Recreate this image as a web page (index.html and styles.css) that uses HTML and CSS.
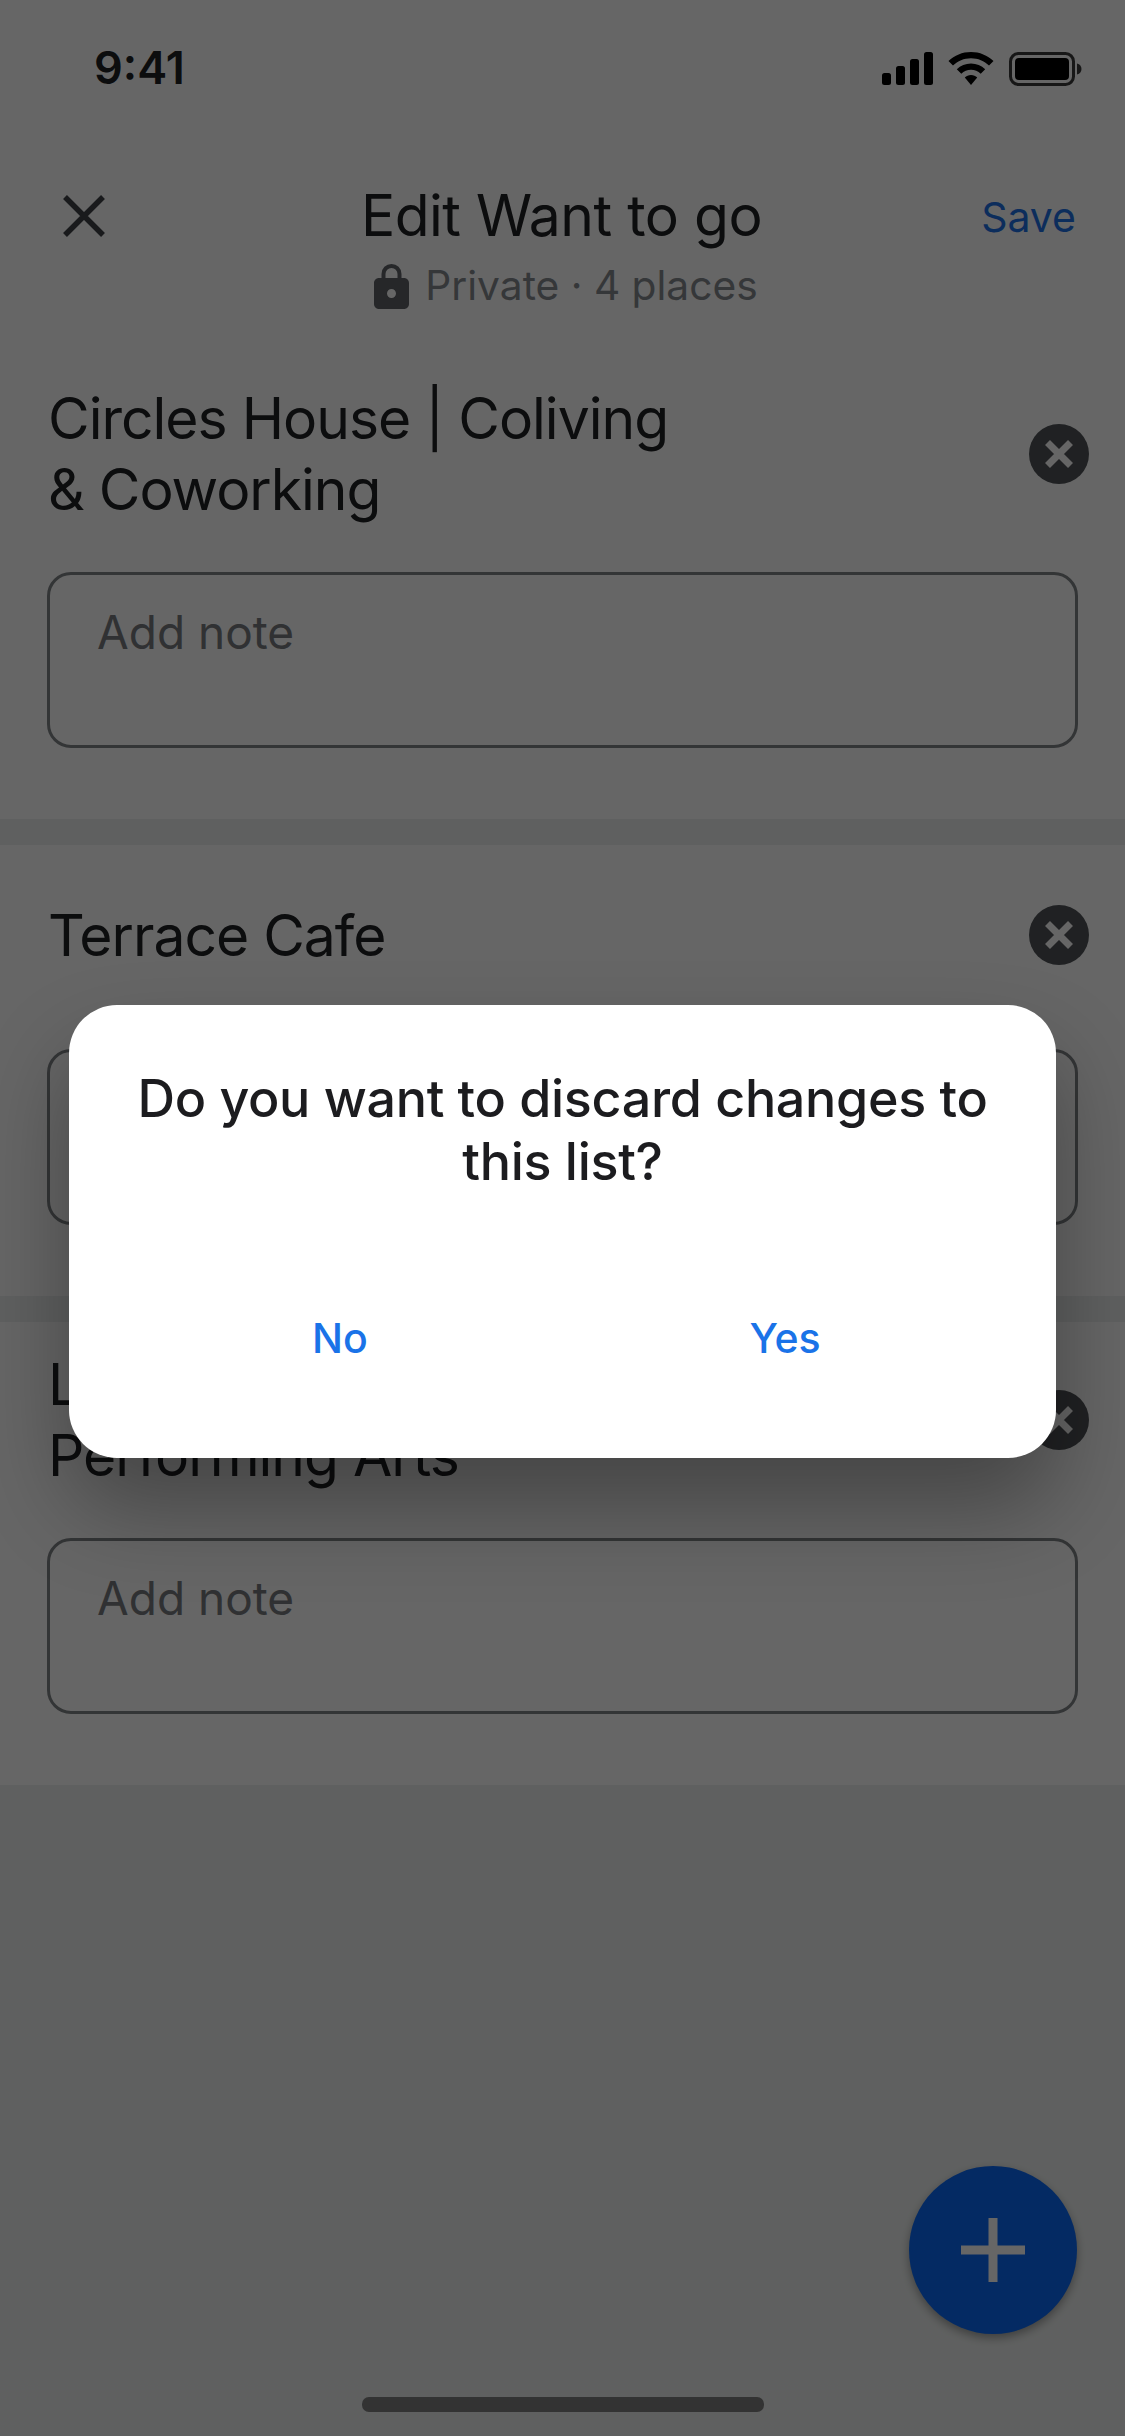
FILE: index.html
```html
<!DOCTYPE html>
<html lang="en">
<head>
<meta charset="utf-8">
<title>Edit Want to go</title>
<link rel="stylesheet" href="styles.css">
</head>
<body>
<div class="screen">
  <div class="status">
    <span class="clock">9:41</span>
    <div class="status-icons">
      <svg class="ic-signal" width="53" height="33" viewBox="0 0 53 33"><rect x="2" y="21" width="9" height="12" rx="2.500"/><rect x="16" y="14" width="9" height="19" rx="2.500"/><rect x="30" y="7" width="9" height="26" rx="2.500"/><rect x="44" y="0" width="9" height="33" rx="2.500"/></svg>
      <svg class="ic-wifi" width="46" height="33" viewBox="0 0 46 33"><path d="M23 0C14.300 0 6.500 3.400 0.500 9L5 13.500C9.700 9.100 16 6.300 23 6.300S36.300 9.100 41 13.500L45.500 9C39.500 3.400 31.700 0 23 0Z"/><path d="M23 11.500C17.500 11.500 12.600 13.600 8.800 17.200L13.300 21.700C15.900 19.300 19.300 17.800 23 17.800S30.100 19.300 32.700 21.700L37.200 17.200C33.400 13.600 28.500 11.500 23 11.500Z"/><path d="M23 23C20.500 23 18.400 24 16.800 25.400L23 33L29.200 25.400C27.600 24 25.500 23 23 23Z"/></svg>
      <svg class="ic-batt" width="73" height="34" viewBox="0 0 73 34"><rect x="1.500" y="1.500" width="63" height="31" rx="8" fill="none" stroke="#3a3a3a" stroke-width="3"/><rect x="6" y="6" width="54" height="22" rx="4"/><path d="M68 11.500c3 .6 4.500 3 4.500 5.500s-1.500 4.900-4.500 5.500z" fill="#3a3a3a"/></svg>
    </div>
  </div>

  <header class="head">
    <svg class="close" width="44" height="44" viewBox="0 0 44 44"><path d="M3 3L41 41M41 3L3 41"/></svg>
    <div class="head-mid">
      <div class="head-title">Edit Want to go</div>
      <div class="head-sub">
        <svg class="lock" width="35" height="45" viewBox="0 0 35 45"><path d="M9.500 15V10C9.500 5.300 13 2 17.500 2S25.500 5.300 25.500 10V15" fill="none" stroke="#5f6368" stroke-width="4"/><path fill-rule="evenodd" d="M5 14H30C32.800 14 35 16.200 35 19V40C35 42.800 32.800 45 30 45H5C2.200 45 0 42.800 0 40V19C0 16.200 2.200 14 5 14ZM17.500 25C15 25 13 27 13 29.500S15 34 17.500 34 22 32 22 29.500 20 25 17.500 25Z"/></svg>
        <span>Private · 4 places</span>
      </div>
    </div>
    <div class="save">Save</div>
  </header>

  <section class="item">
    <div class="row">
      <div class="name">Circles House | Coliving<br>&amp; Coworking</div>
      <svg class="remove" width="60" height="60" viewBox="0 0 60 60"><circle cx="30" cy="30" r="30"/><path d="M18.500 18.500L41.500 41.500M41.500 18.500L18.500 41.500"/></svg>
    </div>
    <div class="note">Add note</div>
  </section>

  <section class="item">
    <div class="row row-single">
      <div class="name">Terrace Cafe</div>
      <svg class="remove" width="60" height="60" viewBox="0 0 60 60"><circle cx="30" cy="30" r="30"/><path d="M18.500 18.500L41.500 41.500M41.500 18.500L18.500 41.500"/></svg>
    </div>
    <div class="note">Add note</div>
  </section>

  <section class="item">
    <div class="row">
      <div class="name">Lincoln Center for the<br>Performing Arts</div>
      <svg class="remove" width="60" height="60" viewBox="0 0 60 60"><circle cx="30" cy="30" r="30"/><path d="M18.500 18.500L41.500 41.500M41.500 18.500L18.500 41.500"/></svg>
    </div>
    <div class="note">Add note</div>
  </section>

  <button class="fab" type="button"><svg width="64" height="64" viewBox="0 0 64 64"><path d="M27.500 0h9v27.500H64v9H36.500V64h-9V36.500H0v-9h27.500z"/></svg></button>
  <div class="scrim"></div>

  <div class="dialog">
    <p class="dialog-text">Do you want to discard changes to this list?</p>
    <div class="dialog-actions">
      <span class="dialog-btn">No</span>
      <span class="dialog-btn">Yes</span>
    </div>
  </div>
  <div class="home-bar"></div>
</div>
</body>
</html>
```
FILE: styles.css
```css
* { box-sizing: border-box; }
html, body { margin: 0; padding: 0; }
body { font-family: Inter, "Liberation Sans", sans-serif; }
.screen {
  position: relative;
  width: 1125px;
  height: 2436px;
  overflow: hidden;
  background: #eef1f0;
  color: #202124;
}
.status {
  height: 132px;
  padding: 44px 43px 0 94px;
  display: flex;
  justify-content: space-between;
  align-items: flex-start;
  background: #fff;
}
.clock { font-size: 45px; font-weight: 600; line-height: 48px; }
.status-icons { display: flex; align-items: flex-start; gap: 15px; padding-top: 8px; }
.head {
  height: 224px;
  background: #fff;
  display: grid;
  grid-template-columns: 1fr auto 1fr;
  padding: 0 52px 0 50px;
}
.close { margin: 62px 0 0 12px; fill: none; stroke: #404347; stroke-width: 5.5; }
.head-mid { display: flex; flex-direction: column; align-items: center; padding-top: 50px; }
.head-title { font-size: 57px; line-height: 68px; letter-spacing: -0.5px; }
.head-sub { display: flex; align-items: center; gap: 16px; margin-top: 13px; padding-left: 9px; color: #85898e; font-size: 40.7px; line-height: 46px; }
.lock { fill: #5f6368; }
.save { justify-self: end; margin: 62px -3px 0 0; font-size: 41px; line-height: 46px; color: #1f72e6; }
.item {
  background: #fff;
  padding: 27px 47px 71px 49px;
  margin-bottom: 26px;
}
.row {
  display: flex;
  justify-content: space-between;
  align-items: center;
  margin-bottom: 47px;
}
.row-single { min-height: 126px; margin-bottom: 51px; }
.name { margin-left: -1px; font-size: 57px; line-height: 71px; letter-spacing: -1px; }
.remove { margin-right: -11px; fill: #505458; }
.remove path { fill: none; stroke: #fff; stroke-width: 7; }
.note {
  margin-left: -2px;
  height: 176px;
  border: 3px solid #808488;
  border-radius: 24px;
  padding: 31px 47px;
  font-size: 46px;
  line-height: 52px;
  color: #787c80;
}
.fab {
  position: absolute;
  left: 909px;
  top: 2166px;
  width: 168px;
  height: 168px;
  padding: 0;
  border: 0;
  border-radius: 50%;
  background: #0a6af8;
  box-shadow: 0 4px 10px rgba(0,0,0,.35);
  display: flex;
  align-items: center;
  justify-content: center;
}
.fab svg { fill: #fff; }
.scrim { position: absolute; inset: 0; background: rgba(0,0,0,.6); }
.dialog {
  position: absolute;
  left: 69px;
  top: 1005px;
  width: 987px;
  height: 453px;
  padding: 62px 60px 0;
  background: #fff;
  border-radius: 48px;
  box-shadow: 0 50px 90px rgba(0,0,0,.32);
  display: flex;
  flex-direction: column;
}
.dialog-text { margin: 0; font-size: 52px; font-weight: 500; line-height: 63px; letter-spacing: -0.3px; text-align: center; color: #1c1c1f; }
.dialog-actions { display: grid; grid-template-columns: 422px 422px; column-gap: 23px; margin-top: 122px; text-align: center; }
.dialog-btn { font-size: 41px; font-weight: 500; line-height: 46px; color: #1a73e8; }
.home-bar {
  position: absolute;
  left: 362px;
  top: 2397px;
  width: 402px;
  height: 15px;
  border-radius: 7px;
  background: #333;
}
```
